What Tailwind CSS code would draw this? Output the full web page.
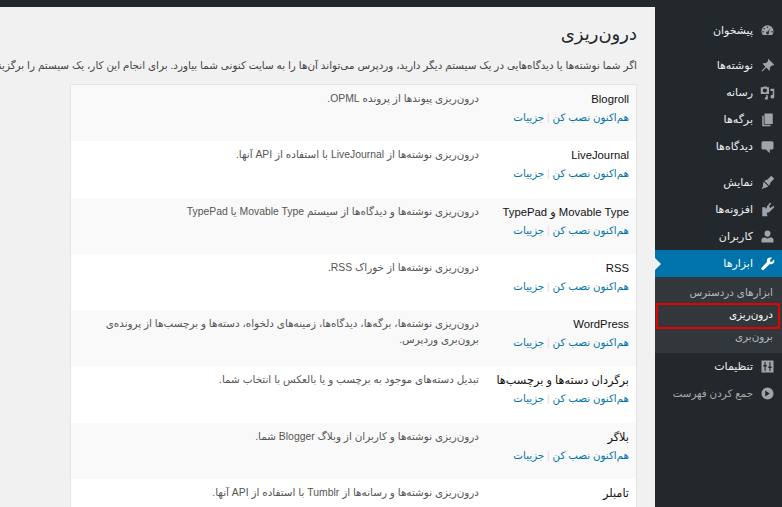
<!DOCTYPE html>
<html dir="rtl" lang="fa">
<head>
<meta charset="utf-8">
<script src="https://cdn.jsdelivr.net/npm/@tailwindcss/browser@4"></script>
</head>
<body class="m-0 overflow-hidden bg-[#f1f1f1] font-['Liberation_Sans','DejaVu_Sans',sans-serif] text-[#444]">
<div class="w-[782px] h-[507px] overflow-hidden flex flex-col">
  <div class="h-[7px] shrink-0 bg-[#23282d]"></div>
  <div class="flex flex-1 min-h-0">
    <!-- sidebar -->
    <aside class="w-[127px] shrink-0 bg-[#23282d] text-[#eee] text-[11px] pt-[10px]">
      <a class="flex items-center h-[27px] pr-[7px] gap-[7px]"><svg class="w-[15px] h-[15px] fill-[#a0a5aa]" viewBox="0 0 20 20"><path fill-rule="evenodd" d="M10 3a8 8 0 0 0-8 8c0 2 .7 3.700 2 5h12c1.300-1.300 2-3 2-5a8 8 0 0 0-8-8zM10 4.500a1 1 0 1 1 0 2 1 1 0 0 1 0-2zM5.500 6.500a1 1 0 1 1 0 2 1 1 0 0 1 0-2zM14 7l-2.500 5.200a1.800 1.800 0 1 1-1.400-.7zM4 10.500a1 1 0 1 1 0 2 1 1 0 0 1 0-2zM16 10.500a1 1 0 1 1 0 2 1 1 0 0 1 0-2z"/></svg><span>پیشخوان</span></a>
      <div class="h-[8px]"></div>
      <a class="flex items-center h-[27px] pr-[7px] gap-[7px]"><svg class="w-[15px] h-[15px] fill-[#a0a5aa]" viewBox="0 0 20 20"><path d="M11 1l8 8-1.500 1-1-.5-3.500 3c.5 2 .2 3.500-.7 4.500L8.500 12.700 3 18l-1-1 5.300-5.500L3.500 7.700c1-1 2.500-1.200 4.500-.7l3-3.500-.5-1z"/></svg><span>نوشته‌ها</span></a>
      <a class="flex items-center h-[27px] pr-[7px] gap-[7px]"><svg class="w-[15px] h-[15px] fill-[#a0a5aa]" viewBox="0 0 20 20"><path fill-rule="evenodd" d="M1 3h3l1-1h4l1 1h2v9H1zM6.500 4.500a2.800 2.800 0 1 0 0 5.600 2.800 2.800 0 0 0 0-5.600zM14 5h5v10.500a2.500 2.500 0 1 1-2-2.400V8h-3zM8 13l2.500 1v3.500a2 2 0 1 1-2-2z"/></svg><span>رسانه</span></a>
      <a class="flex items-center h-[27px] pr-[7px] gap-[7px]"><svg class="w-[15px] h-[15px] fill-[#a0a5aa]" viewBox="0 0 20 20"><path d="M6 2h11v14H6z"/><path d="M3 5h2v12h9v2H3z"/></svg><span>برگه‌ها</span></a>
      <a class="flex items-center h-[27px] pr-[7px] gap-[7px]"><svg class="w-[15px] h-[15px] fill-[#a0a5aa]" viewBox="0 0 20 20"><path d="M4 3h12a2 2 0 0 1 2 2v7a2 2 0 0 1-2 2h-3v5l-5-5H4a2 2 0 0 1-2-2V5a2 2 0 0 1 2-2z"/></svg><span>دیدگاه‌ها</span></a>
      <div class="h-[9px]"></div>
      <a class="flex items-center h-[27px] pr-[7px] gap-[7px]"><svg class="w-[15px] h-[15px] fill-[#a0a5aa]" viewBox="0 0 20 20"><path d="M15 1l4 4-5 5-1 3-1 1-6-6 1-1 3-1zM5 9l6 6c-2 2-3 2-5 2l-4 2 2-4c0-2 0-4 1-6z"/></svg><span>نمایش</span></a>
      <a class="flex items-center h-[27px] pr-[7px] gap-[7px]"><svg class="w-[15px] h-[15px] fill-[#a0a5aa]" viewBox="0 0 20 20"><path d="M13 1l2 1-3 4 2 2 4-3 1 2-5 5c-1 2-3 2-4 2l-1 1 1 4H3V7h4l1 2 1-1c0-1 0-3 2-4z"/></svg><span>افزونه‌ها</span></a>
      <a class="flex items-center h-[27px] pr-[7px] gap-[7px]"><svg class="w-[15px] h-[15px] fill-[#a0a5aa]" viewBox="0 0 20 20"><path d="M10 2a4 4 0 0 1 4 4c0 2-1.500 4.500-4 4.500S6 8 6 6a4 4 0 0 1 4-4zM6 11c1 1 2.500 1.500 4 1.500s3-.5 4-1.500c2 .5 4 1.500 4 3v4H2v-4c0-1.500 2-2.500 4-3z"/></svg><span>کاربران</span></a>
      <div class="relative">
        <a class="flex items-center h-[27px] pr-[7px] gap-[7px] bg-[#0073aa] text-white"><svg class="w-[15px] h-[15px] fill-white" viewBox="0 0 20 20"><path d="M14.500 2a4.500 4.500 0 0 1 1.700.3L13.500 5v2.500H16l2.700-2.700A4.500 4.500 0 0 1 13 10.800L5.500 18a2 2 0 0 1-3.300-2.500L9.300 7.900A4.500 4.500 0 0 1 14.500 2z"/></svg><span>ابزارها</span></a>
        <span class="absolute left-0 top-[8px] w-0 h-0 border-y-[6px] border-y-transparent border-l-[6px] border-l-[#f1f1f1]"></span>
      </div>
      <div class="bg-[#32373c] text-[10.400px] h-[76px] pt-[5px]">
        <div class="h-[22px] pr-[9px] flex items-center text-[#b4b9be]">ابزارهای دردسترس</div>
        <div class="h-[22px] pr-[9px] flex items-center text-white relative">درون‌ریزی
          <span class="absolute left-[1px] right-[2px] top-[-1px] bottom-[-3px] border-2 border-[#e60000]"></span>
        </div>
        <div class="h-[22px] pr-[9px] flex items-center text-[#b4b9be]">برون‌بری</div>
      </div>
      <a class="flex items-center h-[27px] pr-[7px] gap-[7px]"><svg class="w-[15px] h-[15px] fill-[#a0a5aa]" viewBox="0 0 20 20"><path fill-rule="evenodd" d="M2 2h16v16H2zM6 4v4H4.500v2H6v6h1.500v-6H9V8H7.500V4zM12.500 4v6H11v2h1.500v4H14v-4h1.500v-2H14V4z"/></svg><span>تنظیمات</span></a>
      <a class="flex items-center h-[27px] pr-[7px] gap-[7px] text-[10.300px] text-[#aaa]"><svg class="w-[15px] h-[15px] fill-[#a0a5aa]" viewBox="0 0 20 20"><path fill-rule="evenodd" d="M10 2a8 8 0 1 1 0 16 8 8 0 0 1 0-16zM13 6v8l-6-4z" transform="rotate(180 10 10)"/></svg><span>جمع کردن فهرست</span></a>
    </aside>
    <!-- content -->
    <main class="flex-1 min-w-0 overflow-hidden pr-[18px] pt-[13px]">
      <h1 class="text-[18px] leading-[27px] font-normal text-[#23282d] font-['DejaVu_Sans',sans-serif] m-0">درون‌ریزی</h1>
      <p class="mt-[11px] text-[10.400px] leading-[16px] whitespace-nowrap text-[#444]">اگر شما نوشته‌ها یا دیدگاه‌هایی در یک سیستم دیگر دارید، وردپرس می‌تواند آن‌ها را به سایت کنونی شما بیاورد. برای انجام این کار، یک سیستم را برگزینید:</p>
      <div class="mt-[10px] w-[567px] border border-[#e5e5e5] bg-white shadow-[0_1px_1px_rgba(0,0,0,0.04)]">
        <div class="flex h-[56.300px] bg-[#f9f9f9]">
          <div class="w-[150px] shrink-0 pr-[7px] pt-[6px]"><div class="text-[11.300px] leading-[16px] text-[#111]">Blogroll</div><div class="mt-[2px] text-[10.300px] leading-[17px] text-[#0073aa]">هم‌اکنون نصب کن <span class="text-[#ddd]">|</span> جزییات</div></div>
          <div class="pt-[6px] pl-[8px] pr-[7px] text-[10.400px] leading-[16px] text-[#555] flex-1">درون‌ریزی پیوندها از پرونده OPML.</div>
        </div>
        <div class="flex h-[56.300px] bg-white">
          <div class="w-[150px] shrink-0 pr-[7px] pt-[6px]"><div class="text-[11.300px] leading-[16px] text-[#111]">LiveJournal</div><div class="mt-[2px] text-[10.300px] leading-[17px] text-[#0073aa]">هم‌اکنون نصب کن <span class="text-[#ddd]">|</span> جزییات</div></div>
          <div class="pt-[6px] pl-[8px] pr-[7px] text-[10.400px] leading-[16px] text-[#555] flex-1">درون‌ریزی نوشته‌ها از LiveJournal با استفاده از API آنها.</div>
        </div>
        <div class="flex h-[56.300px] bg-[#f9f9f9]">
          <div class="w-[150px] shrink-0 pr-[7px] pt-[6px]"><div class="text-[11.300px] leading-[16px] text-[#111]">Movable Type و TypePad</div><div class="mt-[2px] text-[10.300px] leading-[17px] text-[#0073aa]">هم‌اکنون نصب کن <span class="text-[#ddd]">|</span> جزییات</div></div>
          <div class="pt-[6px] pl-[8px] pr-[7px] text-[10.400px] leading-[16px] text-[#555] flex-1">درون‌ریزی نوشته‌ها و دیدگاه‌ها از سیستم Movable Type یا TypePad</div>
        </div>
        <div class="flex h-[56.300px] bg-white">
          <div class="w-[150px] shrink-0 pr-[7px] pt-[6px]"><div class="text-[11.300px] leading-[16px] text-[#111]">RSS</div><div class="mt-[2px] text-[10.300px] leading-[17px] text-[#0073aa]">هم‌اکنون نصب کن <span class="text-[#ddd]">|</span> جزییات</div></div>
          <div class="pt-[6px] pl-[8px] pr-[7px] text-[10.400px] leading-[16px] text-[#555] flex-1">درون‌ریزی نوشته‌ها از خوراک RSS.</div>
        </div>
        <div class="flex h-[56.300px] bg-[#f9f9f9]">
          <div class="w-[150px] shrink-0 pr-[7px] pt-[6px]"><div class="text-[11.300px] leading-[16px] text-[#111]">WordPress</div><div class="mt-[2px] text-[10.300px] leading-[17px] text-[#0073aa]">هم‌اکنون نصب کن <span class="text-[#ddd]">|</span> جزییات</div></div>
          <div class="pt-[6px] pl-[8px] pr-[7px] text-[10.400px] leading-[16px] text-[#555] flex-1">درون‌ریزی نوشته‌ها، برگه‌ها، دیدگاه‌ها، زمینه‌های دلخواه، دسته‌ها و برچسب‌ها از پرونده‌ی برون‌بری وردپرس.</div>
        </div>
        <div class="flex h-[56.300px] bg-white">
          <div class="w-[150px] shrink-0 pr-[7px] pt-[6px]"><div class="text-[11.300px] leading-[16px] text-[#111]">برگردان دسته‌ها و برچسب‌ها</div><div class="mt-[2px] text-[10.300px] leading-[17px] text-[#0073aa]">هم‌اکنون نصب کن <span class="text-[#ddd]">|</span> جزییات</div></div>
          <div class="pt-[6px] pl-[8px] pr-[7px] text-[10.400px] leading-[16px] text-[#555] flex-1">تبدیل دسته‌های موجود به برچسب و یا بالعکس با انتخاب شما.</div>
        </div>
        <div class="flex h-[56.300px] bg-[#f9f9f9]">
          <div class="w-[150px] shrink-0 pr-[7px] pt-[6px]"><div class="text-[11.300px] leading-[16px] text-[#111]">بلاگر</div><div class="mt-[2px] text-[10.300px] leading-[17px] text-[#0073aa]">هم‌اکنون نصب کن <span class="text-[#ddd]">|</span> جزییات</div></div>
          <div class="pt-[6px] pl-[8px] pr-[7px] text-[10.400px] leading-[16px] text-[#555] flex-1">درون‌ریزی نوشته‌ها و کاربران از وبلاگ Blogger شما.</div>
        </div>
        <div class="flex h-[56.300px] bg-white">
          <div class="w-[150px] shrink-0 pr-[7px] pt-[6px]"><div class="text-[11.300px] leading-[16px] text-[#111]">تامبلر</div><div class="mt-[2px] text-[10.300px] leading-[17px] text-[#0073aa]">هم‌اکنون نصب کن <span class="text-[#ddd]">|</span> جزییات</div></div>
          <div class="pt-[6px] pl-[8px] pr-[7px] text-[10.400px] leading-[16px] text-[#555] flex-1">درون‌ریزی نوشته‌ها و رسانه‌ها از Tumblr با استفاده از API آنها.</div>
        </div>
      </div>
    </main>
  </div>
</div>
</body>
</html>
